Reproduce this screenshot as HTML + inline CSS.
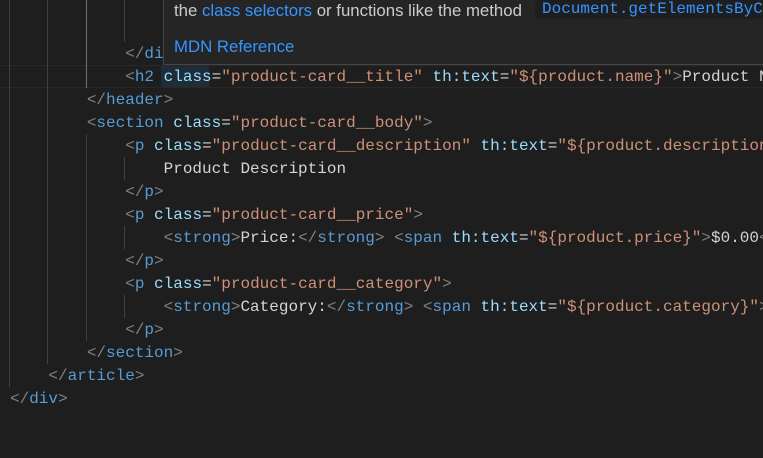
<!DOCTYPE html>
<html style="overflow:hidden"><head><meta charset="utf-8"><style>
html,body{margin:0;width:763px;height:458px;overflow:hidden}
body{background:#1e1e1e;position:relative;font-family:"Liberation Mono",monospace;font-size:16px;}
.r{position:absolute;left:10px;right:0;overflow:hidden;height:23px;line-height:23px;top:0;white-space:pre;color:#d4d4d4;margin-top:1px}
.b{color:#808080}.t{color:#569cd6}.a{color:#9cdcfe}.s{color:#ce9178}
.g{position:absolute;width:1px;background:#404040}
.cur{position:absolute;left:0;right:0;top:65px;height:21px;border-top:1px solid #282828;border-bottom:1px solid #282828}
.hov{position:absolute;left:163px;top:-1px;width:599px;height:64px;background:#252526;border:1px solid #454545;border-right:none;overflow:hidden;font-family:"Liberation Sans",sans-serif;font-size:16.8px;color:#cccccc}
.hov .l{color:#3794ff}
.code{position:absolute;left:371px;top:0;height:19px;line-height:19px;padding:0 7px;background:#1e1e1e;border-radius:4px;font-family:"Liberation Mono",monospace;font-size:16px;color:#3794ff;white-space:pre}
</style></head><body>
<div class="cur"></div>
<div style="position:absolute;left:161px;top:66px;width:48px;height:21px;background:#1f2d38"></div>
<div class="g" style="left:9px;top:0;height:387px"></div>
<div class="g" style="left:47px;top:0;height:364px"></div>
<div class="g" style="left:86px;top:0;height:88px;background:#707070"></div>
<div class="g" style="left:86px;top:134px;height:207px"></div>
<div class="g" style="left:124px;top:0;height:42px"></div>
<div class="g" style="left:124px;top:157px;height:23px"></div>
<div class="g" style="left:124px;top:226px;height:23px"></div>
<div class="g" style="left:124px;top:295px;height:23px"></div>

<div class="r" style="top:42px">            <span class="b">&lt;/</span><span class="t">div</span><span class="b">&gt;</span></div>
<div class="r" style="top:65px">            <span class="b">&lt;</span><span class="t">h2</span> <span class="a">class</span>=<span class="s">"product-card__title"</span> <span class="a">th:text</span>=<span class="s">"${product.name}"</span><span class="b">&gt;</span>Product Name</div>
<div class="r" style="top:88px">        <span class="b">&lt;/</span><span class="t">header</span><span class="b">&gt;</span></div>
<div class="r" style="top:111px">        <span class="b">&lt;</span><span class="t">section</span> <span class="a">class</span>=<span class="s">"product-card__body"</span><span class="b">&gt;</span></div>
<div class="r" style="top:134px">            <span class="b">&lt;</span><span class="t">p</span> <span class="a">class</span>=<span class="s">"product-card__description"</span> <span class="a">th:text</span>=<span class="s">"${product.description}"</span></div>
<div class="r" style="top:157px">                Product Description</div>
<div class="r" style="top:180px">            <span class="b">&lt;/</span><span class="t">p</span><span class="b">&gt;</span></div>
<div class="r" style="top:203px">            <span class="b">&lt;</span><span class="t">p</span> <span class="a">class</span>=<span class="s">"product-card__price"</span><span class="b">&gt;</span></div>
<div class="r" style="top:226px">                <span class="b">&lt;</span><span class="t">strong</span><span class="b">&gt;</span>Price:<span class="b">&lt;/</span><span class="t">strong</span><span class="b">&gt;</span> <span class="b">&lt;</span><span class="t">span</span> <span class="a">th:text</span>=<span class="s">"${product.price}"</span><span class="b">&gt;</span>$0.00<span class="b">&lt;/</span></div>
<div class="r" style="top:249px">            <span class="b">&lt;/</span><span class="t">p</span><span class="b">&gt;</span></div>
<div class="r" style="top:272px">            <span class="b">&lt;</span><span class="t">p</span> <span class="a">class</span>=<span class="s">"product-card__category"</span><span class="b">&gt;</span></div>
<div class="r" style="top:295px">                <span class="b">&lt;</span><span class="t">strong</span><span class="b">&gt;</span>Category:<span class="b">&lt;/</span><span class="t">strong</span><span class="b">&gt;</span> <span class="b">&lt;</span><span class="t">span</span> <span class="a">th:text</span>=<span class="s">"${product.category}"</span><span class="b">&gt;</span>C</div>
<div class="r" style="top:318px">            <span class="b">&lt;/</span><span class="t">p</span><span class="b">&gt;</span></div>
<div class="r" style="top:341px">        <span class="b">&lt;/</span><span class="t">section</span><span class="b">&gt;</span></div>
<div class="r" style="top:364px">    <span class="b">&lt;/</span><span class="t">article</span><span class="b">&gt;</span></div>
<div class="r" style="top:387px"><span class="b">&lt;/</span><span class="t">div</span><span class="b">&gt;</span></div>

<div class="hov">
<div style="position:absolute;left:10px;top:1px;line-height:19px;white-space:nowrap">the <span class="l">class selectors</span> or functions like the method</div>
<div class="code">Document.getElementsByClassName()</div>
<div style="position:absolute;left:10px;top:37px;line-height:19px;" class="l">MDN Reference</div>
</div>
</body></html>
